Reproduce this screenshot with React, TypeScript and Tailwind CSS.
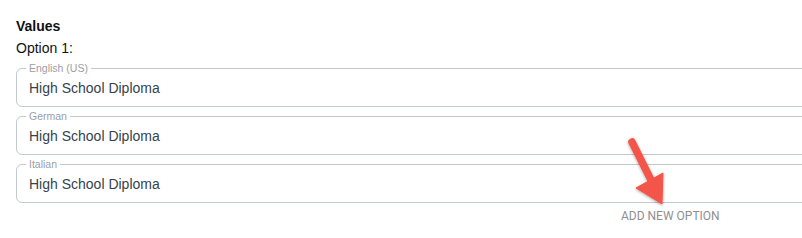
import React from "react";

const fields = [
  { label: "English (US)", value: "High School Diploma" },
  { label: "German", value: "High School Diploma" },
  { label: "Italian", value: "High School Diploma" },
];

function OutlinedField({ label, value }: { label: string; value: string }) {
  return (
    <fieldset className="h-[44px] border border-[#c3c8cd] rounded-[6px] pl-[12px] pr-3 m-0 min-w-0">
      <legend className="px-[3px] -ml-[3px] text-[10.5px] leading-[11px] text-[#9aa0a6]">
        {label}
      </legend>
      <div className="text-[14px] leading-[18px] text-[#36424c] pt-[5px]">
        {value}
      </div>
    </fieldset>
  );
}

export default function App() {
  return (
    <div className="relative w-[802px] h-[238px] bg-white overflow-hidden font-['Liberation_Sans',Arial,sans-serif]">
      <div className="pl-[16px] pt-[18px] w-[830px]">
        <div className="text-[14px] leading-[16px] font-bold text-[#111]">Values</div>
        <div className="text-[14px] leading-[16px] text-[#111] mt-[6px]">Option 1:</div>

        <div className="flex flex-col gap-[4px] mt-[7px]">
          {fields.map((f) => (
            <OutlinedField key={f.label} label={f.label} value={f.value} />
          ))}
        </div>

        <div className="flex justify-start pl-[605px] mt-[6px]">
          <button className="text-[12px] leading-[14px] text-[#8f8f8f] uppercase font-['Roboto',sans-serif]">
            Add new option
          </button>
        </div>
      </div>

      {/* annotation arrow */}
      <svg
        className="absolute left-[620px] top-[132px]"
        width="60"
        height="82"
        viewBox="0 0 60 82"
      >
        <defs>
          <filter id="sh" x="-30%" y="-30%" width="160%" height="160%">
            <feDropShadow dx="0" dy="1" stdDeviation="1.5" floodColor="#000" floodOpacity="0.35" />
          </filter>
        </defs>
        <g filter="url(#sh)" fill="#f4544a" stroke="#f4544a">
          <line x1="12" y1="10" x2="36" y2="58" strokeWidth="7.5" strokeLinecap="round" />
          <polygon points="16,56 43,41 42,72" strokeWidth="1" strokeLinejoin="round" />
        </g>
      </svg>
    </div>
  );
}
